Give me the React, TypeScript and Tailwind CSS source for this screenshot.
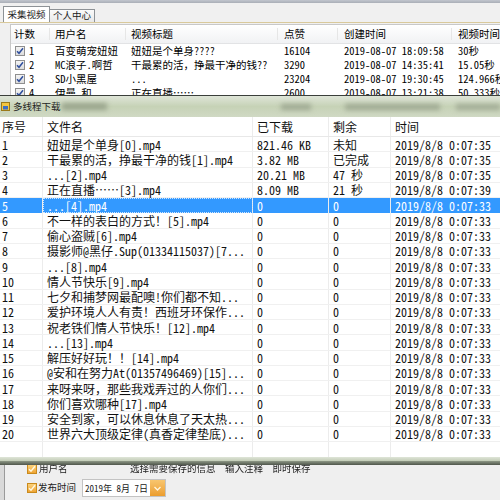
import React from "react";

type Video = { n: number; user: string; title: string; likes: string; created: string; dur: string };

const videos: Video[] = [
  { n: 1, user: "百变萌宠妞妞", title: "妞妞是个单身????", likes: "16104", created: "2019-08-07 18:09:58", dur: "30秒" },
  { n: 2, user: "MC浪子.啊哲", title: "干最累的活，挣最干净的钱??", likes: "3290", created: "2019-08-07 14:35:41", dur: "15.05秒" },
  { n: 3, user: "SD小黑屋", title: "...", likes: "23204", created: "2019-08-07 19:30:45", dur: "124.966秒" },
  { n: 4, user: "伊曼    和", title: "正在直播……", likes: "2600", created: "2019-08-07 13:21:38", dur: "50.333秒" },
];

type Task = { name: string; got: string; left: string; time: string };

const tasks: Task[] = [
  { name: "妞妞是个单身[0].mp4", got: "821.46 KB", left: "未知", time: "2019/8/8 0:07:35" },
  { name: "干最累的活，挣最干净的钱[1].mp4", got: "3.82 MB", left: "已完成", time: "2019/8/8 0:07:35" },
  { name: "...[2].mp4", got: "20.21 MB", left: "47 秒", time: "2019/8/8 0:07:35" },
  { name: "正在直播……[3].mp4", got: "8.09 MB", left: "21 秒", time: "2019/8/8 0:07:39" },
  { name: "...[4].mp4", got: "0", left: "0", time: "2019/8/8 0:07:33" },
  { name: "不一样的表白的方式！[5].mp4", got: "0", left: "0", time: "2019/8/8 0:07:33" },
  { name: "偷心盗贼[6].mp4", got: "0", left: "0", time: "2019/8/8 0:07:33" },
  { name: "摄影师@黑仔.Sup(01334115037)[7...", got: "0", left: "0", time: "2019/8/8 0:07:33" },
  { name: "...[8].mp4", got: "0", left: "0", time: "2019/8/8 0:07:33" },
  { name: "情人节快乐[9].mp4", got: "0", left: "0", time: "2019/8/8 0:07:33" },
  { name: "七夕和捕梦网最配噢!你们都不知...", got: "0", left: "0", time: "2019/8/8 0:07:33" },
  { name: "爱护环境人人有责！西班牙环保作...", got: "0", left: "0", time: "2019/8/8 0:07:33" },
  { name: "祝老铁们情人节快乐！[12].mp4", got: "0", left: "0", time: "2019/8/8 0:07:33" },
  { name: "...[13].mp4", got: "0", left: "0", time: "2019/8/8 0:07:33" },
  { name: "解压好好玩！！[14].mp4", got: "0", left: "0", time: "2019/8/8 0:07:33" },
  { name: "@安和在努力At(01357496469)[15]...", got: "0", left: "0", time: "2019/8/8 0:07:33" },
  { name: "来呀来呀，那些我戏弄过的人你们...", got: "0", left: "0", time: "2019/8/8 0:07:33" },
  { name: "你们喜欢哪种[17].mp4", got: "0", left: "0", time: "2019/8/8 0:07:33" },
  { name: "安全到家，可以休息休息了天太热...", got: "0", left: "0", time: "2019/8/8 0:07:33" },
  { name: "世界六大顶级定律(真香定律垫底)...", got: "0", left: "0", time: "2019/8/8 0:07:33" },
];

function BlueCheck() {
  return (
    <span className="w-[10px] h-[10px] border border-[#8f8f8f] bg-gradient-to-b from-[#f4f4f4] to-[#dcdcdc] flex items-center justify-center">
      <svg width="8" height="8" viewBox="0 0 8 8">
        <path d="M1 4.2 L3 6.3 L7 1.2" fill="none" stroke="#2f4f9e" strokeWidth="1.5" />
      </svg>
    </span>
  );
}

function OrangeCheck() {
  return (
    <span className="w-[10px] h-[10px] border border-[#c98a1c] bg-gradient-to-b from-[#fbd27a] to-[#eea431] flex items-center justify-center">
      <svg width="8" height="8" viewBox="0 0 8 8">
        <path d="M1 4.2 L3 6.3 L7 1.2" fill="none" stroke="#fff8e0" strokeWidth="1.4" />
      </svg>
    </span>
  );
}

function BackgroundWindow() {
  return (
    <div className="flex flex-col h-[500px] bg-[#f0f0f0]">
      <div className="h-[3px] bg-gradient-to-b from-[#c2c6ce] to-[#a9aeb7]" />

      {/* tabs */}
      <div className="h-[19px] flex items-end pl-[3px] text-[9.5px] leading-none text-[#1a1a1a]">
        <div className="h-[16px] w-[47px] bg-white border border-b-0 border-[#8d9296] flex items-center justify-center">
          采集视频
        </div>
        <div className="h-[13px] w-[45px] bg-gradient-to-b from-[#fafafa] to-[#e8e8e8] border border-b-0 border-l-0 border-[#8d9296] flex items-center justify-center">
          个人中心
        </div>
      </div>
      <div className="h-px bg-[#d9c99b]" />

      {/* video list */}
      <div className="flex-1 pt-[1px] pl-[10px]">
        <div className="h-full bg-white border-l border-t border-[#c8c8c8] text-[10.5px] leading-[12px] text-black">
          <div className="grid grid-cols-[39px_76px_152px_60px_114px_1fr] h-[19px] bg-gradient-to-b from-white to-[#f1f2f4] border-b border-[#e2e3e5] items-center">
            <div className="pl-[3px] border-r border-[#e6e6e6]"><span>计数</span></div>
            <div className="pl-[5px] border-r border-[#e6e6e6]"><span>用户名</span></div>
            <div className="pl-[5px] border-r border-[#e6e6e6]"><span>视频标题</span></div>
            <div className="pl-[6px] border-r border-[#e6e6e6]"><span>点赞</span></div>
            <div className="pl-[6px] border-r border-[#e6e6e6]"><span>创建时间</span></div>
            <div className="pl-[6px]"><span>视频时间</span></div>
          </div>
          {videos.map((v) => (
            <div key={v.n} className="grid grid-cols-[39px_76px_152px_60px_114px_1fr] h-[14px] items-center whitespace-nowrap">
              <div className="pl-[4px] flex items-center gap-[4px]">
                <BlueCheck />
                <span>{v.n}</span>
              </div>
              <div className="pl-[5px]"><span>{v.user}</span></div>
              <div className="pl-[5px]"><span>{v.title}</span></div>
              <div className="pl-[6px]"><span>{v.likes}</span></div>
              <div className="pl-[6px]"><span>{v.created}</span></div>
              <div className="pl-[6px]"><span>{v.dur}</span></div>
            </div>
          ))}
        </div>
      </div>

      {/* bottom options */}
      <div className="h-[42px] bg-[#d9d9d9] pl-[4px]">
        <div className="h-full border-l border-[#9a9a9a] bg-[#efefef] text-[9.5px] leading-[11px] text-[#222]">
          <div className="mt-[3px] h-[15px] flex items-center blur-[0.6px]">
            <span className="ml-[22px]">
              <OrangeCheck />
            </span>
            <span className="ml-[2px] w-[91px]">用户名</span>
            <span>选择需要保存的信息&nbsp;&nbsp;输入注释&nbsp;&nbsp;即时保存</span>
          </div>
          <div className="mt-[3px] h-[18px] flex items-center">
            <span className="ml-[22px]">
              <OrangeCheck />
            </span>
            <span className="ml-[1px] leading-none">发布时间</span>
            <div className="ml-[6px] w-[84px] h-[18px] bg-white border border-[#c3c3c3] flex items-center">
              <span className="pl-[2px] flex-1 leading-none text-[9px]">2019年 8月 7日</span>
              <span className="w-[15px] h-[16px] bg-gradient-to-b from-[#f8c66e] to-[#eb9d2c] flex items-center justify-center">
                <svg width="7" height="5" viewBox="0 0 7 5">
                  <path d="M0.5 1 L3.5 4 L6.5 1" fill="none" stroke="#fff6de" strokeWidth="1.3" />
                </svg>
              </span>
            </div>
          </div>
        </div>
      </div>
    </div>
  );
}

function Cell({ first, last, focus, children }: { first?: boolean; last?: boolean; focus?: boolean; children?: React.ReactNode }) {
  let cls = first ? "pl-[2px] h-full flex items-center" : "pl-[4px] h-full flex items-center";
  if (!last) cls += " border-r border-[#ececec]";
  if (focus) cls += " outline outline-1 outline-dotted outline-[#cfe6ff] -outline-offset-1";
  return (
    <div className={cls}>
      <span>{children}</span>
    </div>
  );
}

function DownloadWindow() {
  return (
    <div className="absolute left-0 top-[95px] w-[500px] h-[370px] flex flex-col">
      <div className="h-px bg-[#3b3f3a]" />

      {/* glass title bar, with the blurred window behind it */}
      <div className="relative h-[21px] bg-gradient-to-b from-[#dfe5d8] via-[#c6d2b6] to-[#d0d9c4] overflow-hidden">
        <div className="absolute inset-0 flex items-center blur-[2.5px]">
          <span className="ml-[62px] w-[46px] h-[7px] bg-[#99a48c]" />
          <span className="ml-[174px] w-[30px] h-[6px] bg-[#9ea892]" />
          <span className="ml-[34px] w-[96px] h-[6px] bg-[#9ea892]" />
          <span className="ml-[16px] w-[45px] h-[6px] bg-[#a2ac96]" />
        </div>
        <div className="relative h-full flex items-center text-[9.5px] text-[#1e1e1e] leading-none">
          <svg width="9" height="9" viewBox="0 0 9 9" className="ml-[1px]">
            <rect x="0.5" y="0.5" width="8" height="8" fill="#f3c640" stroke="#9b7a1a" />
            <rect x="2" y="4" width="5" height="3.5" fill="#3d6fc4" />
          </svg>
          <span className="ml-[3px]">多线程下载</span>
        </div>
      </div>

      {/* download table */}
      <div className="flex-1 bg-white text-[12px] leading-[13px] text-[#111] flex flex-col">
        <div className="grid grid-cols-[43px_210px_76px_62px_1fr] h-[20px] items-center border-b border-[#e8e8e8]">
          <Cell first>序号</Cell>
          <Cell>文件名</Cell>
          <Cell>已下载</Cell>
          <Cell>剩余</Cell>
          <Cell last>时间</Cell>
        </div>
        {tasks.map((t, i) => {
          const sel = i === 4;
          return (
            <div
              key={i}
              className={
                sel
                  ? "grid grid-cols-[43px_210px_76px_62px_1fr] h-[15.25px] items-center whitespace-nowrap bg-[#3399ff] text-white"
                  : "grid grid-cols-[43px_210px_76px_62px_1fr] h-[15.25px] items-center whitespace-nowrap border-b border-[#f0f0f0]"
              }
            >
              <Cell first>{i + 1}</Cell>
              <Cell focus={sel}>{t.name}</Cell>
              <Cell>{t.got}</Cell>
              <Cell>{t.left}</Cell>
              <Cell last>{t.time}</Cell>
            </div>
          );
        })}
        <div className="flex-1 grid grid-cols-[43px_210px_76px_62px_1fr]">
          <span className="border-r border-[#ececec]" />
          <span className="border-r border-[#ececec]" />
          <span className="border-r border-[#ececec]" />
          <span className="border-r border-[#ececec]" />
          <span />
        </div>
      </div>

      {/* glass bottom frame */}
      <div className="h-[4px] bg-gradient-to-b from-[#dfe5d8] to-[#c2ccb6]" />
      <div className="h-[4px] bg-gradient-to-b from-[#8e9886] to-[#4f564b]" />
    </div>
  );
}

export default function App() {
  return (
    <div className="relative w-[500px] h-[500px] overflow-hidden font-['Noto_Sans_Mono_CJK_SC','Noto_Sans_CJK_SC',sans-serif]">
      <BackgroundWindow />
      <DownloadWindow />
    </div>
  );
}
